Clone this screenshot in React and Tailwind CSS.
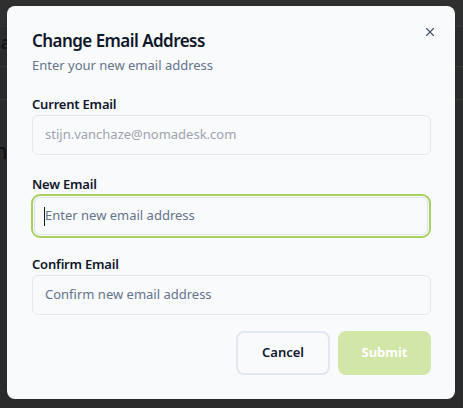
import React from "react";

export default function App() {
  return (
    <div
      className="relative w-[463px] h-[408px] overflow-hidden bg-[#2b2b2b]"
      style={{ fontFamily: '"Noto Sans", "Open Sans", sans-serif' }}
    >
      {/* faint background page */}
      <div className="absolute inset-0 flex flex-col pointer-events-none">
        <div className="h-[27px] border-b border-[#363636] bg-[#2f2f2f]" />
        <div className="h-[40px] border-b border-[#363636] flex items-center">
          <span className="text-[#111] text-[17px] font-semibold -ml-[25px] -mt-[8px]">Email</span>
        </div>
        <div className="h-[33px] border-b border-[#363636]" />
        <div className="h-[36px]" />
        <div className="h-[28px] flex items-center">
          <span className="text-[#111] text-[22px] -ml-[6px]">n</span>
        </div>
      </div>

      <div className="absolute left-[7px] top-[6px] w-[448px] h-[393px] rounded-lg bg-[#f8fafc] px-6 pt-[23px] flex flex-col">
        <button className="absolute right-[18px] top-[19px] text-[#475569]">
          <svg width="14" height="14" viewBox="0 0 24 24" fill="none" stroke="currentColor" strokeWidth="2" strokeLinecap="round">
            <path d="M18 6 6 18" />
            <path d="m6 6 12 12" />
          </svg>
        </button>
        <h2 className="text-[17px] leading-[24px] font-semibold tracking-[-0.55px] text-[#0f172a] ml-[1px]">Change Email Address</h2>
        <p className="text-[13px] leading-[20px] text-[#64748b] mt-[2px] ml-[1px]">Enter your new email address</p>

        <div className="mt-[19px] flex flex-col">
          <label className="text-[13px] leading-[20px] font-semibold tracking-[-0.2px] text-[#0f172a] ml-[1px]">Current Email</label>
          <div className="mt-[1px] h-[40px] rounded-md border border-[#e2e8f0] bg-[#f8fafc] flex items-center px-3 ml-[1px]">
            <span className="text-[13px] text-[#9ca3af]">stijn.vanchaze@nomadesk.com</span>
          </div>
        </div>

        <div className="mt-[19px] flex flex-col">
          <label className="text-[13px] leading-[20px] font-semibold tracking-[-0.2px] text-[#0f172a] ml-[1px]">New Email</label>
          <div className="h-[44px] rounded-[9px] border-2 border-[#a8d05e] p-[1px]">
            <div className="h-full rounded-md border border-[#dbe3ee] bg-[#f8fafc] flex items-center px-[9px]">
              <span className="w-[1px] h-[19px] bg-[#0f172a]" />
              <span className="text-[13px] text-[#64748b]">Enter new email address</span>
            </div>
          </div>
        </div>

        <div className="mt-[16px] flex flex-col">
          <label className="text-[13px] leading-[20px] font-semibold tracking-[-0.2px] text-[#0f172a] ml-[1px]">Confirm Email</label>
          <div className="mt-[1px] h-[40px] rounded-md border border-[#e2e8f0] bg-[#f8fafc] flex items-center px-3 ml-[1px]">
            <span className="text-[13px] text-[#64748b]">Confirm new email address</span>
          </div>
        </div>

        <div className="mt-[16px] flex justify-end gap-2">
          <button className="w-[94px] h-[44px] rounded-lg border-2 border-[#e2e8f0] bg-[#f8fafc] text-[13px] font-semibold text-[#0f172a]">
            Cancel
          </button>
          <button className="w-[93px] h-[44px] rounded-lg bg-[#d2e6a8] text-[13px] font-bold text-white">
            Submit
          </button>
        </div>
      </div>
    </div>
  );
}
